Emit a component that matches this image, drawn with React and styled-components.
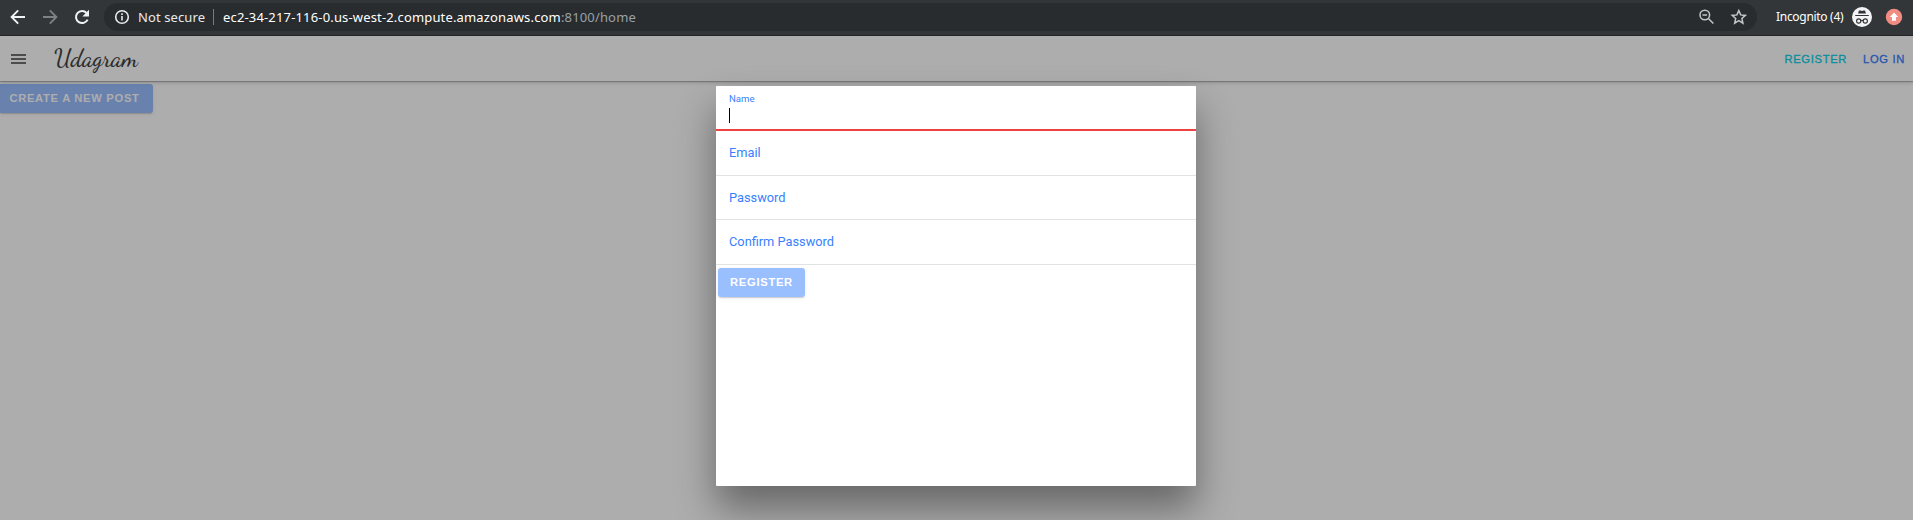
import React from "react";
import styled, { createGlobalStyle } from "styled-components";

const Global = createGlobalStyle`
  *, *::before, *::after { box-sizing: border-box; }
  html, body { margin: 0; padding: 0; overflow: hidden; }
  body { font-family: Roboto, "Liberation Sans", sans-serif; background: #fff; }
`;

const Screen = styled.div`
  display: flex;
  flex-direction: column;
  width: 100%;
  height: 520px;
  overflow: hidden;
`;

const BrowserBar = styled.header`
  flex: none;
  display: flex;
  align-items: center;
  height: 36px;
  padding: 0 10px 2px 8px;
  background: #323639;
  border-bottom: 1px solid #242628;
  font-family: "Noto Sans", "Open Sans", sans-serif;
  font-size: 13px;
  color: #fff;
  white-space: nowrap;
`;

const NavIcons = styled.div`
  display: flex;
  align-items: center;
  gap: 12px;
  width: 96px;
`;

const Glyph = styled.svg`
  display: block;
  flex: none;
  width: ${(p) => p.$size || 20}px;
  height: ${(p) => p.$size || 20}px;
`;

const AddressBar = styled.div`
  flex: 1;
  display: flex;
  align-items: center;
  height: 28px;
  margin-top: 1px;
  padding: 0 9px 0 10px;
  border-radius: 14px;
  background: #282c2f;
`;

const Security = styled.span`
  width: 68px;
  margin-left: 8px;
  color: #e8eaed;
  letter-spacing: 0.1px;
`;

const Divider = styled.span`
  width: 1px;
  height: 16px;
  margin: 0 9px 0 7px;
  background: #787b7e;
`;

const Url = styled.span`
  flex: 1;
  letter-spacing: 0.16px;
`;

const UrlTail = styled.span`
  color: #9aa0a6;
`;

const AddressActions = styled.div`
  display: flex;
  gap: 12px;
`;

const Incognito = styled.div`
  display: flex;
  align-items: center;
  gap: 8px;
  margin-left: 19px;
  margin-right: 13px;
  font-size: 12px;
  letter-spacing: -0.3px;
`;

const IncognitoLabel = styled.span`
  width: 68px;
`;

const Page = styled.div`
  position: relative;
  flex: 1;
  background: #fff;
`;

const Toolbar = styled.div`
  display: flex;
  align-items: center;
  height: 45px;
  padding: 0 8px;
  background: #fff;
  box-shadow: 0 1px 1px rgba(0, 0, 0, 0.22), 0 2px 4px rgba(0, 0, 0, 0.14);
`;

const Brand = styled.div`
  flex: 1;
  margin-left: 26px;
  font-family: "Dancing Script", "Liberation Serif", cursive;
  font-size: 24.4px;
  font-weight: 500;
  line-height: 30px;
  color: #424242;
`;

const ToolbarLinks = styled.nav`
  display: flex;
  gap: 16px;
`;

const ToolbarLink = styled.span`
  font-family: "Liberation Sans", sans-serif;
  font-size: 11.2px;
  letter-spacing: 0.67px;
  color: ${(p) => p.$color};
  -webkit-text-stroke: 0.3px ${(p) => p.$color};
`;

const SolidButton = styled.button`
  display: block;
  width: ${(p) => p.$width}px;
  height: 29px;
  padding: 0 ${(p) => (p.$flushLeft ? 4 : 0)}px 2px 0;
  border: 0;
  border-radius: ${(p) => (p.$flushLeft ? "0 3px 3px 0" : "3px")};
  background: #3880ff;
  color: #fff;
  font-size: 11.2px;
  font-weight: 600;
  font-family: "Liberation Sans", sans-serif;
  letter-spacing: 0.7px;
  opacity: 0.5;
  box-shadow: 0 2px 1px -1px rgba(0, 0, 0, 0.2), 0 1px 1px rgba(0, 0, 0, 0.14), 0 1px 4px rgba(0, 0, 0, 0.12);
`;

const Content = styled.main`
  padding-top: 3px;
`;

const Backdrop = styled.div`
  position: absolute;
  inset: 0;
  display: flex;
  justify-content: center;
  align-items: flex-start;
  padding: 50px 1px 0 0;
  background: rgba(0, 0, 0, 0.32);
  overflow: hidden;
`;

const Modal = styled.form`
  width: 480px;
  height: 400px;
  background: #fff;
  border-radius: 1px;
  box-shadow: 0 22.4px 38.4px rgba(0, 0, 0, 0.4);
`;

const Field = styled.div`
  display: flex;
  flex-direction: column;
  justify-content: center;
  height: ${(p) => p.$height}px;
  padding: 0 13px 1px;
  border-bottom: 1px solid #e2e2e2;
  color: #3880ff;
  font-size: 12.8px;
`;

const ActiveField = styled(Field)`
  justify-content: flex-start;
  padding-top: 7px;
  border-bottom: 2px solid #f04141;
`;

const FloatingLabel = styled.label`
  font-size: 9.6px;
  line-height: 12px;
`;

const Caret = styled.span`
  width: 1px;
  height: 15px;
  margin-top: 3px;
  background: #000;
`;

const FormActions = styled.div`
  padding: 3px 2px;
`;

function BackIcon() {
  return (
    <Glyph viewBox="0 0 20 20" fill="none" stroke="#f1f3f4" strokeWidth="1.9">
      <path d="M17 10H4M10.2 3.4 3.6 10l6.6 6.6" />
    </Glyph>
  );
}

function ForwardIcon() {
  return (
    <Glyph viewBox="0 0 20 20" fill="none" stroke="#7e8184" strokeWidth="1.9">
      <path d="M3 10h13M9.8 3.4l6.6 6.6-6.6 6.6" />
    </Glyph>
  );
}

function ReloadIcon() {
  return (
    <Glyph viewBox="0 0 20 20" fill="none">
      <path d="M15.6 12.6A6.1 6.1 0 1 1 14.6 5.9" stroke="#f1f3f4" strokeWidth="2" />
      <path d="M17 2.8v6.6h-6.6z" fill="#f1f3f4" />
    </Glyph>
  );
}

function InfoIcon() {
  return (
    <Glyph $size={16} viewBox="0 0 16 16" fill="none" stroke="#e8eaed" strokeWidth="1.6">
      <circle cx="8" cy="8" r="6.3" />
      <path d="M8 7v4.4M8 4.3v1.7" />
    </Glyph>
  );
}

function ZoomOutIcon() {
  return (
    <Glyph viewBox="0 0 20 20" fill="none" stroke="#c3c6c9" strokeWidth="1.5">
      <circle cx="8.8" cy="8" r="4.8" />
      <path d="M12.4 11.5l5 5M6.5 8h4.6" />
    </Glyph>
  );
}

function StarIcon() {
  return (
    <Glyph viewBox="0 0 20 20" fill="none" stroke="#c3c6c9" strokeWidth="1.5">
      <path d="M10.8 3.6l1.9 4.3 4.7.5-3.5 3.1 1 4.7-4.1-2.5-4.1 2.5 1-4.7-3.5-3.1 4.7-.5z" />
    </Glyph>
  );
}

function IncognitoIcon() {
  return (
    <Glyph viewBox="0 0 20 20" fill="none">
      <circle cx="10" cy="10" r="10" fill="#f1f3f4" />
      <path d="M7 3.4h1.5l1.5.5 1.5-.5H13l1 3.1H6zM3.2 7.9h13.6v1.2H3.2z" fill="#303438" />
      <g stroke="#303438" strokeWidth="1.1">
        <circle cx="6.7" cy="14" r="2.1" />
        <circle cx="13.3" cy="14" r="2.1" />
        <path d="M8.8 13.7q1.2-.7 2.4 0" />
      </g>
    </Glyph>
  );
}

function UpdateIcon() {
  return (
    <Glyph $size={18} viewBox="0 0 18 18">
      <circle cx="9" cy="9" r="8.2" fill="#f28b82" />
      <path d="M9 4.6l4.2 4.5H11v3.7H7V9.1H4.8z" fill="#fff" />
    </Glyph>
  );
}

function MenuIcon() {
  return (
    <Glyph viewBox="0 0 20 20" fill="#424242">
      <path d="M3 5.2h15v1.6H3zM3 9.2h15v1.6H3zM3 13.2h15v1.6H3z" />
    </Glyph>
  );
}

export default function App() {
  return (
    <Screen>
      <Global />
      <BrowserBar>
        <NavIcons>
          <BackIcon />
          <ForwardIcon />
          <ReloadIcon />
        </NavIcons>
        <AddressBar>
          <InfoIcon />
          <Security>Not secure</Security>
          <Divider />
          <Url>
            ec2-34-217-116-0.us-west-2.compute.amazonaws.com<UrlTail>:8100/home</UrlTail>
          </Url>
          <AddressActions>
            <ZoomOutIcon />
            <StarIcon />
          </AddressActions>
        </AddressBar>
        <Incognito>
          <IncognitoLabel>Incognito (4)</IncognitoLabel>
          <IncognitoIcon />
        </Incognito>
        <UpdateIcon />
      </BrowserBar>
      <Page>
        <Toolbar>
          <MenuIcon />
          <Brand>Udagram</Brand>
          <ToolbarLinks>
            <ToolbarLink $color="#0cd1e8">REGISTER</ToolbarLink>
            <ToolbarLink $color="#3880ff">LOG IN</ToolbarLink>
          </ToolbarLinks>
        </Toolbar>
        <Content>
          <SolidButton $width={153} $flushLeft>CREATE A NEW POST</SolidButton>
        </Content>
        <Backdrop>
          <Modal>
            <ActiveField $height={45}>
              <FloatingLabel>Name</FloatingLabel>
              <Caret />
            </ActiveField>
            <Field $height={45}>Email</Field>
            <Field $height={44}>Password</Field>
            <Field $height={45}>Confirm Password</Field>
            <FormActions>
              <SolidButton type="button" $width={87}>REGISTER</SolidButton>
            </FormActions>
          </Modal>
        </Backdrop>
      </Page>
    </Screen>
  );
}
